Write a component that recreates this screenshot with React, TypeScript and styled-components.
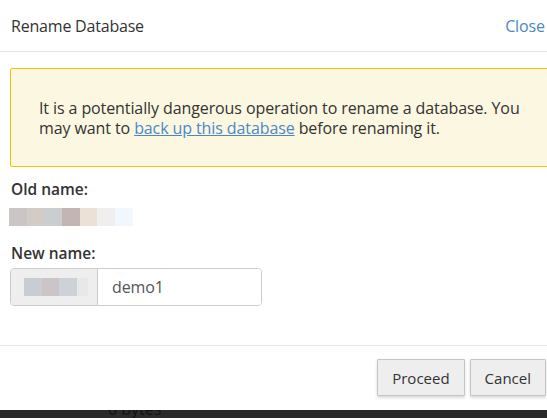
import styled, { createGlobalStyle } from 'styled-components'

const GlobalStyle = createGlobalStyle`
    html, body {
        margin: 0;
        padding: 0;
        width: 547px;
        height: 418px;
        overflow: hidden;
        background: #2b2b2b;
    }
    body {
        font-family: "Open Sans", "Noto Sans", Arial, sans-serif;
        color: #333;
    }
`

const Page = styled.div`
    display: flex;
    flex-direction: column;
    width: 547px;
    height: 418px;
    overflow: hidden;
`

const Modal = styled.div`
    width: 560px;
    flex: none;
    background: #fff;
    display: flex;
    flex-direction: column;
`

const Header = styled.div`
    height: 51px;
    border-bottom: 1px solid #e5e5e5;
    padding: 0 15px 0 11px;
    display: flex;
    align-items: center;
    justify-content: space-between;
`

const Title = styled.h4`
    margin: 0;
    font-size: 16px;
    letter-spacing: -0.2px;
    font-weight: 400;
    color: #333;
`

const CloseLink = styled.a`
    font-size: 16px;
    letter-spacing: -0.1px;
    color: #4a88c9;
    text-decoration: none;
    cursor: pointer;
`

const Body = styled.div`
    padding: 16px 10px 39px 10px;
    display: flex;
    flex-direction: column;
    align-items: flex-start;
`

const Warning = styled.div`
    align-self: stretch;
    background: #fcf7e1;
    border: 1px solid #f2c300;
    border-radius: 2px;
    padding: 29px 20px 28px 28px;
    font-size: 16px;
    letter-spacing: -0.1px;
    line-height: 20px;
    color: #333;
`

const Link = styled.a`
    color: #4a88c9;
    text-decoration: underline;
`

const Label = styled.div<{ $top: number }>`
    margin-top: ${p => p.$top}px;
    padding-left: 1px;
    font-size: 15.5px;
    line-height: 20px;
    font-weight: 600;
    color: #333;
`

const Pixels = styled.div<{ $top?: number; $left?: number }>`
    display: flex;
    margin-top: ${p => p.$top ?? 0}px;
    margin-left: ${p => p.$left ?? 0}px;
`

const Pixel = styled.span<{ $c: string; $w?: number }>`
    display: block;
    width: ${p => p.$w ?? 18}px;
    height: 18px;
    background: ${p => p.$c};
`

const InputGroup = styled.div`
    margin-top: 5px;
    display: flex;
    height: 38px;
    width: 252px;
    border: 1px solid #ccc;
    border-radius: 4px;
    overflow: hidden;
    box-sizing: border-box;
`

const Addon = styled.div`
    width: 87px;
    background: #eee;
    border-right: 1px solid #ccc;
    display: flex;
    align-items: center;
    padding-left: 13px;
    box-sizing: border-box;
`

const Input = styled.input`
    flex: 1;
    min-width: 0;
    border: none;
    outline: none;
    padding: 0 14px;
    font-family: inherit;
    font-size: 16px;
    letter-spacing: -0.1px;
    color: #555;
    background: #fff;
`

const Footer = styled.div`
    border-top: 1px solid #e5e5e5;
    padding: 13px 14px 14px 0;
    display: flex;
    justify-content: flex-end;
    gap: 5px;
`

const Button = styled.button`
    height: 37px;
    padding: 0 14px;
    font-family: inherit;
    font-size: 15px;
    color: #333;
    background: #eee;
    border: 1px solid #c4c4c4;
    border-radius: 1px;
    box-shadow: 0 2px 3px rgba(0, 0, 0, 0.15);
    cursor: pointer;
`

const Backdrop = styled.div`
    flex: 1;
    overflow: hidden;
    background: #2b2b2b;
    padding-left: 108px;
`

const Behind = styled.div`
    margin-top: -11px;
    font-size: 16px;
    line-height: 20px;
    color: #111;
`

const oldName: [string, number][] = [
    ['#cbc5c6', 18], ['#d2cbc6', 17], ['#cbced1', 18], ['#c3b5b2', 18],
    ['#ebe1d6', 17], ['#f0eeee', 18], ['#f0f7fd', 18],
]
const prefix: [string, number][] = [
    ['#c8cdd3', 18], ['#ccc5c8', 17], ['#ccd2d8', 18], ['#e8e8e8', 11],
]

function App() {
    return (
        <Page>
            <GlobalStyle />
            <Modal>
                <Header>
                    <Title>Rename Database</Title>
                    <CloseLink>Close</CloseLink>
                </Header>

                <Body>
                    <Warning>
                        It is a potentially dangerous operation to rename a database. You may want
                        to <Link>back up this database</Link> before renaming it.
                    </Warning>

                    <Label $top={12}>Old name:</Label>
                    <Pixels $top={9} $left={-1}>
                        {oldName.map(([c, w], i) => <Pixel key={i} $c={c} $w={w} />)}
                    </Pixels>

                    <Label $top={17}>New name:</Label>
                    <InputGroup>
                        <Addon>
                            <Pixels>
                                {prefix.map(([c, w], i) => <Pixel key={i} $c={c} $w={w} />)}
                            </Pixels>
                        </Addon>
                        <Input defaultValue='demo1' />
                    </InputGroup>
                </Body>

                <Footer>
                    <Button>Proceed</Button>
                    <Button>Cancel</Button>
                </Footer>
            </Modal>
            <Backdrop>
                <Behind>0 bytes</Behind>
            </Backdrop>
        </Page>
    )
}

export default App
